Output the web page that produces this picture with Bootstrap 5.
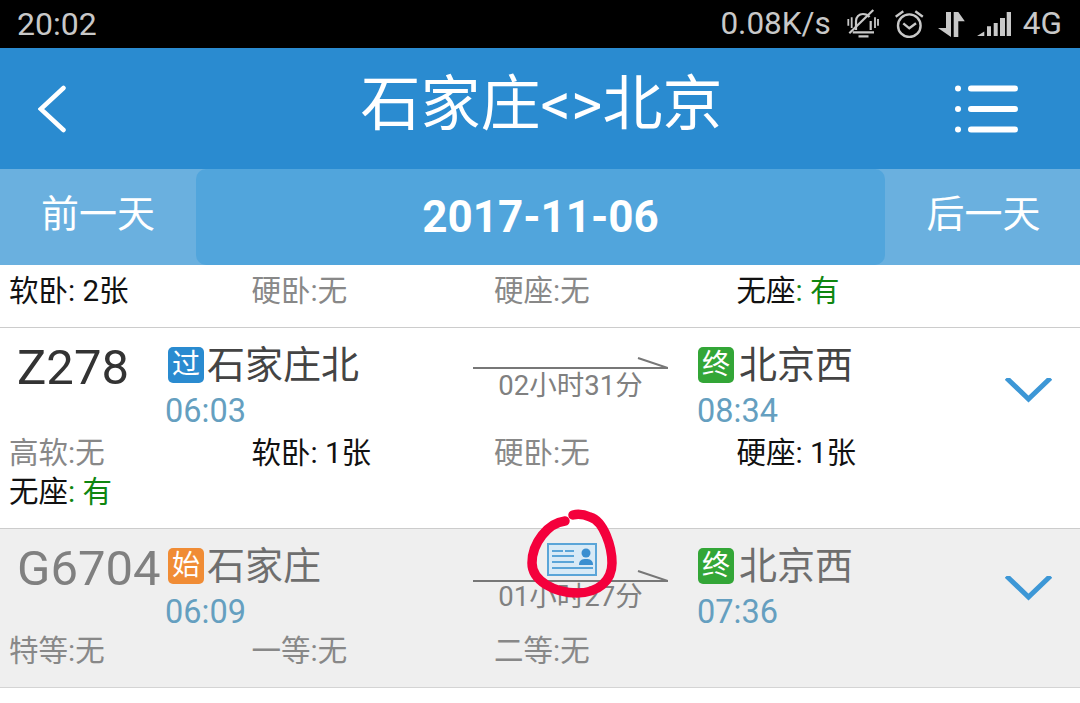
<!DOCTYPE html>
<html lang="zh">
<head>
    <meta charset="UTF-8">
    <meta name="viewport" content="width=device-width, initial-scale=1.0">
    <title>石家庄&lt;&gt;北京</title>
    <link href="https://cdn.jsdelivr.net/npm/bootstrap@5.3.0/dist/css/bootstrap.min.css" rel="stylesheet">
    <style>
        body {
            font-family: Roboto, "Noto Sans CJK SC", sans-serif;
            background: #fff;
            overflow: hidden;
        }
        .status-strip {
            height: 48px;
            background: #000;
            color: #c8c8c8;
            line-height: 46px;
            padding: 0 18px 0 17px;
        }
        .status-clock { font-size: 32px; }
        .status-speed { font-size: 31.5px; }
        .status-net { font-size: 31.5px; margin-left: 12px; }
        .status-strip svg { display: block; }
        .icon-bell { margin-left: 16px; }
        .icon-alarm { margin-left: 16px; }
        .icon-arrows { margin-left: 14px; }
        .icon-signal { margin-left: 12px; }
        .title-strip { height: 121px; background: #2a8bd0; color: #fff; }
        .title-side { width: 360px; flex-shrink: 0; }
        .title-back { padding-left: 38px; }
        .title-menu { width: 357px; padding-right: 62px; }
        .title-text { font-size: 60px; line-height: 1; margin-top: -8px; white-space: nowrap; }
        .date-strip { height: 96px; background: #6ab0df; color: #fff; }
        .date-side { width: 196px; font-size: 38px; padding-bottom: 6px; }
        .date-side.is-next { width: 195px; padding-left: 2px; }
        .date-main { background: #51a5dc; font-size: 44px; border-radius: 10px; }
        .seat-block { width: 980px; padding-left: 9px; font-size: 29.5px; line-height: 39px; color: #111; }
        .seat-none { color: #888; }
        .seat-yes { color: #0f860f; }
        .seat-first { padding-top: 7px; padding-bottom: 16px; }
        .seat-block .col-3 { width: 242.5px; white-space: nowrap; }
        .train-row { border-top: 1px solid #ccc; }
        .train-row.is-last { border-bottom: 1px solid #d4d4d4; background: #efefef; }
        .train-row.is-last .train-code { color: #808080; }
        .train-row.is-last .station-name { color: #6e6e6e; }
        .train-head { padding-top: 17px; }
        .train-code { width: 166px; padding-left: 17px; font-size: 49px; line-height: 46px; color: #333; white-space: nowrap; }
        .train-from { width: 307px; }
        .train-to { width: 309px; margin-left: 28px; }
        .station-line { height: 40px; margin-left: 2px; margin-bottom: 3px; }
        .station-name { font-size: 38px; line-height: 40px; color: #444; padding-left: 3px; }
        .train-to .station-name { padding-left: 5px; }
        .stop-tag {
            width: 36px;
            height: 36px;
            border-radius: 5px;
            color: #fff;
            font-size: 28px;
            line-height: 35px;
        }
        .tag-pass { background: #2a8bd0; }
        .tag-end { background: #33a637; }
        .tag-start { background: #f08c35; }
        .stop-time { font-size: 32.5px; line-height: 46px; color: #659fc0; margin-left: -1px; }
        .train-to .stop-time { margin-left: 1px; }
        .trip-col { width: 195px; }
        .trip-col svg { display: block; }
        .trip-time { font-size: 27.5px; line-height: 30px; color: #808080; margin-top: 1px; }
        .trip-low { padding-top: 12px; }
        .trip-low .trip-time { margin-top: -1px; }
        .drop-mark { padding-top: 33px; }
        .drop-mark svg { display: block; }
        .drop-low { padding-top: 30px; }
        .seats-upper { padding-bottom: 16px; }
        .seats-lower { margin-top: -3px; padding-bottom: 16px; }
        .overlay-mark { position: absolute; left: 520px; top: 505px; }
    </style>
</head>
<body>
    <div class="status-strip d-flex align-items-center">
        <span class="status-clock me-auto">20:02</span>
        <span class="status-speed">0.08K/s</span>
        <svg class="icon-bell" width="32" height="30" viewBox="0 0 32 30" fill="none" stroke="#c8c8c8" stroke-width="2.200">
            <path d="M9 21V12c0-4 3-7 7-7 3 0 5 1 6.500 3M23.700 12v9M5.700 23.300H27M11.500 27.300h10"/>
            <path d="M2.300 24.300L26.300 1"/>
            <path d="M1.300 10v6.700M4.700 8.300V19M28 8.300V19M31 10v6.700" stroke-width="1.800"/>
        </svg>
        <svg class="icon-alarm" width="29" height="28" viewBox="0 0 29 28" fill="none" stroke="#c8c8c8" stroke-width="2.400">
            <circle cx="14.300" cy="15.700" r="11.300"/>
            <path d="M8.300 13.300l6 5 6.700-5M.700 6.700L8.300 1.300M20.300 1.300l7.500 5.400"/>
        </svg>
        <svg class="icon-arrows" width="27" height="25" viewBox="0 0 27 25" fill="#c8c8c8">
            <path d="M8 0h5v25L0 16h8zM15.700 25V0h4.600l6.500 9.300h-6.500V25z"/>
        </svg>
        <svg class="icon-signal" width="34" height="24" viewBox="0 0 34 24" fill="#c8c8c8">
            <path d="M0 24l7.300-4.500V24zM10 14.300h4V24h-4zM16.700 11h4v13h-4zM23 6h5v18h-5zM29.700 0H34v24h-4.300z"/>
        </svg>
        <span class="status-net">4G</span>
    </div>

    <div class="title-strip d-flex align-items-center">
        <div class="title-side title-back">
            <svg class="d-block" width="30" height="52" viewBox="0 0 30 52" fill="none" stroke="#fff" stroke-width="4.500" stroke-linecap="round">
                <path d="M25.500 5L2.800 26l22.700 21"/>
            </svg>
        </div>
        <div class="title-text flex-grow-1 text-center">石家庄&lt;&gt;北京</div>
        <div class="title-side title-menu d-flex justify-content-end">
            <svg class="d-block" width="64" height="52" viewBox="0 0 64 52" fill="#fff">
                <circle cx="4" cy="5.500" r="3"/><circle cx="4" cy="26" r="3"/><circle cx="4" cy="46.500" r="3"/>
                <rect x="14" y="2.500" width="50" height="6" rx="3"/>
                <rect x="14" y="23" width="50" height="6" rx="3"/>
                <rect x="14" y="43.500" width="50" height="6" rx="3"/>
            </svg>
        </div>
    </div>

    <div class="date-strip d-flex">
        <div class="date-side d-flex align-items-center justify-content-center">前一天</div>
        <div class="date-main flex-grow-1 d-flex align-items-center justify-content-center fw-bold">2017-11-06</div>
        <div class="date-side is-next d-flex align-items-center justify-content-center">后一天</div>
    </div>

    <div class="seat-block seat-first row g-0">
        <div class="col-3">软卧: 2张</div>
        <div class="col-3 seat-none">硬卧:无</div>
        <div class="col-3 seat-none">硬座:无</div>
        <div class="col-3">无座<span class="seat-yes">: 有</span></div>
    </div>

    <div class="train-row">
        <div class="train-head d-flex">
            <div class="train-code">Z278</div>
            <div class="train-from">
                <div class="station-line d-flex align-items-center">
                    <span class="stop-tag tag-pass text-center">过</span>
                    <span class="station-name">石家庄北</span>
                </div>
                <div class="stop-time">06:03</div>
            </div>
            <div class="trip-col">
                <svg width="195" height="25" viewBox="0 0 195 25" fill="none" stroke="#777" stroke-width="2">
                    <path d="M0 23H195L165 13"/>
                </svg>
                <div class="trip-time text-center">02小时31分</div>
            </div>
            <div class="train-to">
                <div class="station-line d-flex align-items-center">
                    <span class="stop-tag tag-end text-center">终</span>
                    <span class="station-name">北京西</span>
                </div>
                <div class="stop-time">08:34</div>
            </div>
            <div class="drop-mark">
                <svg width="47" height="25" viewBox="0 0 47 25" fill="none" stroke="#3d97d6" stroke-width="5"><path d="M1.500 0L23.500 21 45.500 0"/></svg>
            </div>
        </div>
        <div class="seat-block seats-upper row g-0">
            <div class="col-3 seat-none">高软:无</div>
            <div class="col-3">软卧: 1张</div>
            <div class="col-3 seat-none">硬卧:无</div>
            <div class="col-3">硬座: 1张</div>
            <div class="col-3">无座<span class="seat-yes">: 有</span></div>
        </div>
    </div>

    <div class="train-row is-last">
        <div class="train-head d-flex">
            <div class="train-code">G6704</div>
            <div class="train-from">
                <div class="station-line d-flex align-items-center">
                    <span class="stop-tag tag-start text-center">始</span>
                    <span class="station-name">石家庄</span>
                </div>
                <div class="stop-time">06:09</div>
            </div>
            <div class="trip-col trip-low">
                <svg width="195" height="25" viewBox="0 0 195 25" fill="none" stroke="#777" stroke-width="2">
                    <path d="M0 23H195L165 13"/>
                </svg>
                <div class="trip-time text-center">01小时27分</div>
            </div>
            <div class="train-to">
                <div class="station-line d-flex align-items-center">
                    <span class="stop-tag tag-end text-center">终</span>
                    <span class="station-name">北京西</span>
                </div>
                <div class="stop-time">07:36</div>
            </div>
            <div class="drop-mark drop-low">
                <svg width="47" height="25" viewBox="0 0 47 25" fill="none" stroke="#3d97d6" stroke-width="5"><path d="M1.500 0L23.500 21 45.500 0"/></svg>
            </div>
        </div>
        <div class="seat-block seats-lower row g-0">
            <div class="col-3 seat-none">特等:无</div>
            <div class="col-3 seat-none">一等:无</div>
            <div class="col-3 seat-none">二等:无</div>
        </div>
    </div>

    <!-- hand-drawn red ring and id card icon sit over the G6704 row -->
    <svg class="overlay-mark" width="105" height="98" viewBox="0 0 105 98" fill="none">
        <rect x="28" y="39" width="48" height="31" fill="#d8eaf6" stroke="#5aa5d8" stroke-width="2"/>
        <path d="M32 46h11M45 46h9M32 51h22M32 57h22M32 63h41" stroke="#5aa5d8" stroke-width="2"/>
        <circle cx="66" cy="48" r="4.500" fill="#3b8fd0"/>
        <path d="M59 60c0-5 3-6 7-6s7 1 7 6z" fill="#3b8fd0"/>
        <path d="M45 16C28 18 12 38 12 58c0 18 23 30 45 30 21 0 35-12 35-30C92 42 84 16 70 12c-7-3-13-3-17-2" stroke="#f4003c" stroke-width="9.500" stroke-linecap="round"/>
    </svg>

    <script src="https://cdn.jsdelivr.net/npm/bootstrap@5.3.0/dist/js/bootstrap.bundle.min.js"></script>
</body>
</html>
